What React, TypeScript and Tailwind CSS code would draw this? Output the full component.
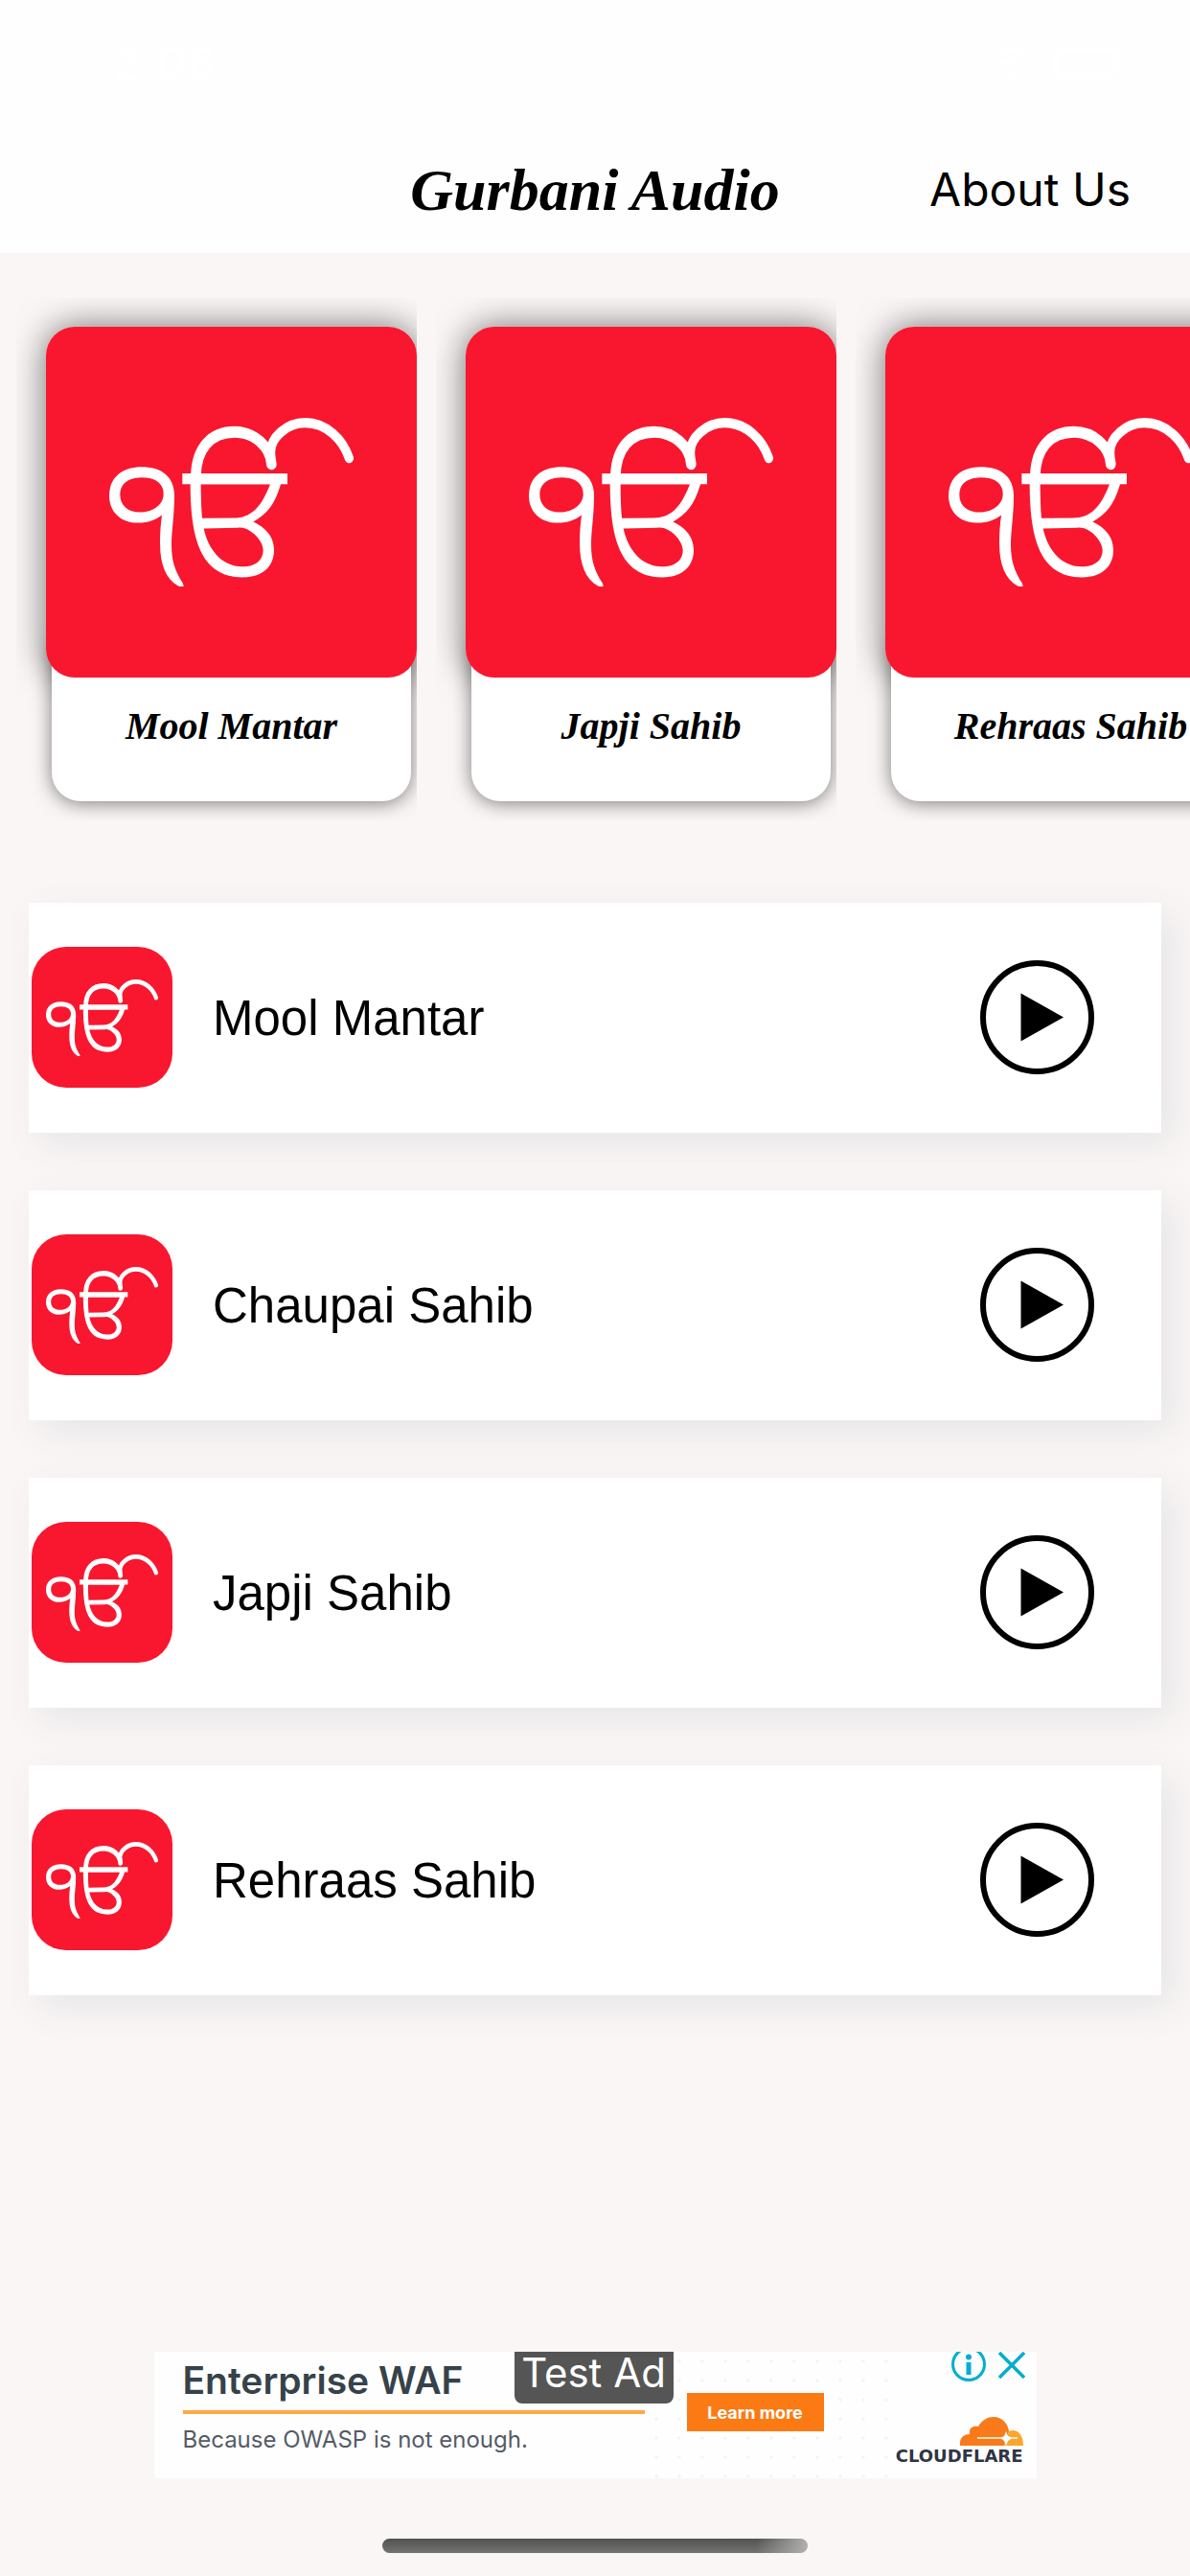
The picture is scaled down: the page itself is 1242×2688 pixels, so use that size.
const featured = ["Mool Mantar", "Japji Sahib", "Rehraas Sahib"];
const tracks = ["Mool Mantar", "Chaupai Sahib", "Japji Sahib", "Rehraas Sahib"];

function EkOnkar({ className }: { className: string }) {
  return (
    <svg
      viewBox="252 394 765 477"
      preserveAspectRatio="none"
      className={className}
      fill="#fff"
      fillRule="evenodd"
      aria-hidden="true"
    >
      <path d="M456 615C456 563 420 533 353 533C290 533 252 565 252 614C252 660 288 691 343 691C372 691 397 683 417 669C413 695 411 720 411 748C411 810 430 850 467 869Q477 873 485 870Q485 864 479 857C458 825 447 800 447 752C447 715 456 670 456 615ZM422 610C422 640 388 661 348 661C310 661 286 642 286 611C286 580 312 563 355 563C398 563 422 580 422 610Z" />
      <path d="M481 551H810V582H481Z" />
      <path d="M506 575C506 720 530 845 670 845C735 845 768 812 768 768C768 727 738 703 703 688C750 665 775 630 790 578ZM539 582H756C728 645 700 677 640 677L543 678C540 650 539 615 539 582ZM548 707L655 705C690 700 734 740 734 768C734 800 705 815 670 815C600 815 560 760 548 707Z" />
      <g fill="none" stroke="#fff" strokeLinecap="round">
        <path strokeWidth="32" d="M523 560C525 480 570 434 645 434C705 434 757 475 760 525" />
        <path strokeWidth="28" d="M758 498C752 450 810 408 865 408C935 408 985 458 1003 508" />
      </g>
    </svg>
  );
}

function FeaturedCard({ title }: { title: string }) {
  return (
    <li className="flex h-[545px] w-[418px] shrink-0 justify-end overflow-hidden pt-[30px]">
      <button type="button" className="flex h-[495px] w-[387px] flex-col items-center">
        {/* shadow sits under the label, the tile itself above it */}
        <span className="flex h-[366px] w-full shrink-0 rounded-[30px] shadow-[0_0_36px_rgba(0,0,0,0.55)]">
          <span className="z-20 flex flex-1 rounded-[30px] bg-[#f8172f] pt-[95px] pl-[66px]">
            <EkOnkar className="h-[176px] w-[255px]" />
          </span>
        </span>
        <span className="z-10 -mt-9 flex h-[165px] w-[375px] shrink-0 items-center justify-center rounded-b-[30px] bg-white pt-2 font-['Liberation_Serif'] text-[40px] font-bold whitespace-nowrap italic shadow-[0_2px_20px_rgba(0,0,0,0.5)]">
          {title}
        </span>
      </button>
    </li>
  );
}

function TrackRow({ title }: { title: string }) {
  return (
    <li className="flex h-60 items-center bg-white pr-[70px] pb-0.5 pl-[3px] shadow-[12px_12px_36px_rgba(70,90,130,0.1)]">
      <span className="flex size-[147px] rounded-[36px] bg-[#f8172f] pt-[34px] pl-[15px]">
        <EkOnkar className="h-20 w-[117px]" />
      </span>
      <span className="flex-1 pt-1 pl-[42px] font-['Liberation_Sans'] text-[51px] leading-[60px]">{title}</span>
      <button type="button" aria-label={`Play ${title}`}>
        <svg viewBox="0 0 119 119" className="size-[119px]">
          <circle cx="59.5" cy="59.5" r="56.5" fill="none" stroke="#000" strokeWidth="6" />
          <path d="M42.500 34.500L87 59.500L42.500 84.500Z" />
        </svg>
      </button>
    </li>
  );
}

function AdBanner() {
  return (
    <aside className="relative flex h-[132px] w-[921px] bg-[#fefefe] text-[#36424a]">
      <div className="w-[512px] pt-2.5 pl-[30px] font-[Inter]">
        <p className="text-[39px] leading-[39px] font-semibold">Enterprise WAF</p>
        <div className="mt-3 h-1 bg-[#ffa947]" />
        <p className="mt-3 text-[24px] leading-[30px] text-[#555b66]">Because OWASP is not enough.</p>
      </div>
      <div className="flex-1 bg-[radial-gradient(circle,#edf5f6_1px,transparent_2px)] bg-[length:24px_20px] pt-[43px] pl-[44px]">
        <button type="button" className="h-10 w-[143px] bg-[#fb7a14] font-[Inter] text-[18px] font-bold text-white">
          Learn more
        </button>
      </div>
      <div className="flex flex-col items-end justify-end pr-[14px] pb-[14px]">
        <svg viewBox="0 0 66 30" className="h-[30px] w-[66px]">
          <path fill="#f97a1a" d="M0 30C-1 23 3 18 10 18C9 12 13 9 19 10C23 3 29 0 35 0C44 0 50 7 51 15L46 30Z" />
          <path fill="#fba62c" d="M46 30L51 15C60 11 66 19 66 30Z" />
          <path stroke="#ffe0b8" strokeWidth="2" d="M18 22H60" />
          <path fill="#fff" d="M48 15L50 20L55 22L50 25L48 30L46 25L42 22L46 20Z" />
        </svg>
        <p className="mt-0.5 font-['DejaVu_Sans'] text-[18px] leading-[18px] font-bold text-[#2f3444]">CLOUDFLARE</p>
      </div>
      <span className="absolute top-0 left-[376px] h-[54px] w-[166px] rounded-b-lg bg-[#555] text-center font-[Inter] text-[42px] leading-[44px] text-white">
        Test Ad
      </span>
      <div className="absolute top-0 right-[12px] flex gap-[13px]">
        <button type="button" aria-label="Ad information">
          <svg viewBox="0 0 36 32" className="h-8 w-9">
            <circle cx="18" cy="13" r="16.500" fill="none" stroke="#00aecd" strokeWidth="3" />
            <circle cx="18" cy="5.500" r="3" fill="#00aecd" />
            <path fill="#00aecd" d="M15.500 11H20.500V24H15.500Z" />
          </svg>
        </button>
        <button type="button" aria-label="Close ad">
          <svg viewBox="0 0 28 32" className="h-8 w-7" stroke="#00aecd" strokeWidth="3.500">
            <path d="M1 1L27 27M27 1L1 27" />
          </svg>
        </button>
      </div>
    </aside>
  );
}

export default function App() {
  return (
    <div className="flex min-h-screen flex-col bg-[#faf6f5] text-black">
      <header className="h-[264px] bg-[#fefefe]">
        <div className="flex h-[132px] items-center justify-between pr-[62px] pl-[118px] font-[Inter] text-white">
          <span className="text-[48px] leading-none font-semibold">2:08</span>
          <svg viewBox="0 0 150 36" className="h-9 w-[150px]" fill="none" stroke="#fff" strokeWidth="5">
            <path d="M4 14Q24 -6 44 14M11 22Q24 9 37 22M20 30H28" />
            <rect x="72" y="4" width="64" height="28" rx="8" />
            <path d="M142 13V23" />
          </svg>
        </div>
        <div className="grid h-[132px] grid-cols-[1fr_auto_1fr] items-center pr-[62px]">
          <h1 className="col-start-2 pl-[62px] font-['Liberation_Serif'] text-[62px] leading-[72px] font-bold italic">
            Gurbani Audio
          </h1>
          <a href="#about" className="justify-self-end font-[Inter] text-[48px] leading-[60px]">
            About Us
          </a>
        </div>
      </header>

      <main>
        <ul className="mt-[47px] flex gap-5 overflow-x-auto pl-[17px] [scrollbar-width:none]">
          {featured.map((title) => (
            <FeaturedCard key={title} title={title} />
          ))}
        </ul>
        <ul className="mt-[86px] flex flex-col gap-[60px] px-[30px]">
          {tracks.map((title) => (
            <TrackRow key={title} title={title} />
          ))}
        </ul>
      </main>

      <footer className="mt-auto flex flex-col items-center gap-[63px] pt-16 pb-6">
        <AdBanner />
        <div className="h-[15px] w-[444px] rounded-full bg-[linear-gradient(to_right,transparent_88%,#b0b0ae),linear-gradient(#515351,#757271)]" />
      </footer>
    </div>
  );
}
